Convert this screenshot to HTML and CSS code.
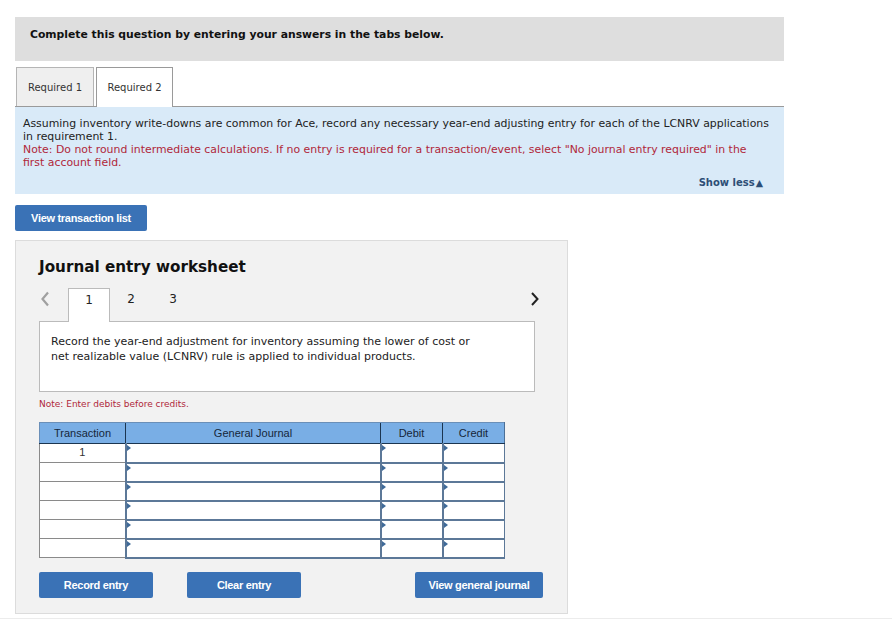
FILE: index.html
```html
<!DOCTYPE html>
<html lang="en">
<head>
<meta charset="utf-8">
<title>Journal entry worksheet</title>
<link rel="stylesheet" href="styles.css">
</head>
<body>
<div class="page">
  <div class="instr">Complete this question by entering your answers in the tabs below.</div>
  <div class="tabs">
    <div class="tab">Required 1</div>
    <div class="tab active">Required 2</div>
  </div>
  <div class="prompt">
    <p class="q">Assuming inventory write-downs are common for Ace, record any necessary year-end adjusting entry for each of the LCNRV applications in requirement 1.</p>
    <p class="note">Note: Do not round intermediate calculations. If no entry is required for a transaction/event, select "No journal entry required" in the<br>first account field.</p>
    <div class="showless">Show less<span class="tri">&#9650;</span></div>
  </div>
  <button class="btn btn-list">View transaction list</button>

  <div class="worksheet">
    <h2 class="ws-title">Journal entry worksheet</h2>
    <div class="nav">
      <span class="arrow prev"><svg width="10" height="16" viewBox="0 0 10 16"><path d="M8 1.5 L2.5 8 L8 14.5" fill="none" stroke="#a0a0a0" stroke-width="2.2"/></svg></span>
      <span class="num current">1</span>
      <span class="num">2</span>
      <span class="num">3</span>
      <span class="arrow next"><svg width="10" height="16" viewBox="0 0 10 16"><path d="M2 2 L7.5 8 L2 14" fill="none" stroke="#222" stroke-width="2"/></svg></span>
    </div>
    <div class="desc">Record the year-end adjustment for inventory assuming the lower of cost or net realizable value (LCNRV) rule is applied to individual products.</div>
    <div class="debnote">Note: Enter debits before credits.</div>
    <table class="jt">
      <thead>
        <tr><th class="c-t">Transaction</th><th class="c-g">General Journal</th><th class="c-d">Debit</th><th class="c-c">Credit</th></tr>
      </thead>
      <tbody>
        <tr><td class="tx">1</td><td class="in"></td><td class="in"></td><td class="in"></td></tr>
        <tr><td class="tx"></td><td class="in"></td><td class="in"></td><td class="in"></td></tr>
        <tr><td class="tx"></td><td class="in"></td><td class="in"></td><td class="in"></td></tr>
        <tr><td class="tx"></td><td class="in"></td><td class="in"></td><td class="in"></td></tr>
        <tr><td class="tx"></td><td class="in"></td><td class="in"></td><td class="in"></td></tr>
        <tr><td class="tx"></td><td class="in"></td><td class="in"></td><td class="in"></td></tr>
      </tbody>
    </table>
    <div class="actions">
      <button class="btn btn-rec">Record entry</button>
      <button class="btn btn-clr">Clear entry</button>
      <button class="btn btn-view">View general journal</button>
    </div>
  </div>
</div>
<div class="footline"></div>
</body>
</html>
```

FILE: styles.css
```css
* { box-sizing: border-box; }
body {
  margin: 0;
  background: #fff;
  font-family: "DejaVu Sans", Verdana, sans-serif;
  font-size: 11px;
  color: #222;
}
.page {
  padding: 17px 0 0 15px;
  width: 784px;
}
.instr {
  background: #dedede;
  height: 44px;
  padding: 11px 0 0 15px;
  font-weight: bold;
  font-size: 10.8px;
  line-height: 13px;
  color: #111;
}
.tabs {
  margin-top: 6px;
  display: flex;
  height: 40px;
  border-bottom: 1px solid #9a9a9a;
  padding-left: 1px;
}
.tab {
  width: 78px;
  height: 39px;
  border: 1px solid #b5b5b5;
  border-bottom: none;
  background: #efefef;
  display: flex;
  align-items: center;
  justify-content: center;
  font-size: 10px;
  color: #333;
  margin-right: 2px;
}
.tab.active {
  background: #fff;
  height: 40px;
  margin-bottom: -1px;
  border-color: #9a9a9a;
  width: 77px;
}
.prompt {
  background: #d9eaf8;
  height: 87px;
  padding: 10px 2px 0 8px;
  line-height: 13px;
  font-size: 10.9px;
  position: relative;
}
.prompt p { margin: 0; }
.note { color: #b0273a; }
.showless {
  position: absolute;
  right: 21px;
  bottom: 5px;
  font-weight: bold;
  font-size: 10px;
  color: #2d4e76;
}
.showless .tri { font-size: 9.5px; margin-left: 1px; }
.btn {
  border: none;
  border-radius: 2px;
  background: #3a72b6;
  color: #fff;
  font-family: "Liberation Sans", Arial, sans-serif;
  font-weight: bold;
  font-size: 11px;
  letter-spacing: -0.3px;
  height: 26px;
  padding: 0;
  cursor: pointer;
}
.btn-list {
  display: block;
  margin-top: 11px;
  width: 132px;
}
.worksheet {
  margin-top: 9px;
  width: 553px;
  height: 374px;
  background: #f2f2f2;
  border: 1px solid #dcdcdc;
  padding: 0 23px;
}
.ws-title {
  margin: 16px 0 0 0;
  font-size: 15.2px;
  font-weight: bold;
  color: #111;
  height: 20px;
  line-height: 20px;
}
.nav {
  margin-top: 11px;
  height: 33px;
  display: flex;
  align-items: flex-start;
  position: relative;
  z-index: 1;
}
.arrow {
  display: flex;
  padding-top: 3px;
}
.prev { width: 29px; padding-left: 1px; }
.next { margin-left: auto; margin-right: 4px; }
.num {
  width: 42px;
  height: 34px;
  display: flex;
  justify-content: center;
  padding-top: 4px;
  font-size: 12px;
  color: #222;
}
.num.current {
  background: #fff;
  border: 1px solid #bbb;
  border-bottom: none;
}
.desc {
  width: 496px;
  height: 71px;
  margin-top: 0;
  background: #fff;
  border: 1px solid #bbb;
  padding: 12px 60px 0 11px;
  line-height: 15px;
  color: #222;
}
.debnote {
  margin-top: 7px;
  font-size: 9px;
  color: #b0273a;
  height: 12px;
}
.jt {
  margin-top: 11px;
  border-collapse: collapse;
  font-family: "Liberation Sans", Arial, sans-serif;
  font-size: 11px;
}
.jt th {
  background: #79aee5;
  color: #16273a;
  font-weight: normal;
  height: 21px;
  padding: 0;
  border-top: 1px solid #6a8fb8;
  border-bottom: 1px solid #1b3550;
  border-left: 1px solid #1b3550;
}
.jt th.c-t { border-left: 1px solid #6a8fb8; }
.jt th.c-c { border-right: 1px solid #4c6f96; }
.c-t { width: 86px; }
.c-g { width: 255px; }
.c-d { width: 62px; }
.c-c { width: 62px; }
.jt td {
  height: 19px;
  padding: 0;
  background: #fff;
}
.jt td.tx {
  border: 1px solid #8a8a8a;
  text-align: center;
  vertical-align: top;
  padding-top: 2px;
  color: #333;
}
.jt td.in {
  position: relative;
  border: 2px solid #5c7898;
  border-top-width: 1px;
  border-right-width: 1px;
}
.jt td.in::before {
  content: "";
  position: absolute;
  left: 0;
  top: 1px;
  border-left: 4px solid #3f6a99;
  border-top: 3px solid transparent;
  border-bottom: 3px solid transparent;
}
.actions {
  margin-top: 13px;
  display: flex;
}
.btn-rec { width: 114px; }
.btn-clr { width: 114px; margin-left: 34px; }
.btn-view { width: 128px; margin-left: 114px; }
.footline {
  margin-top: 4px;
  border-top: 1px solid #ececec;
  height: 1px;
}
```
